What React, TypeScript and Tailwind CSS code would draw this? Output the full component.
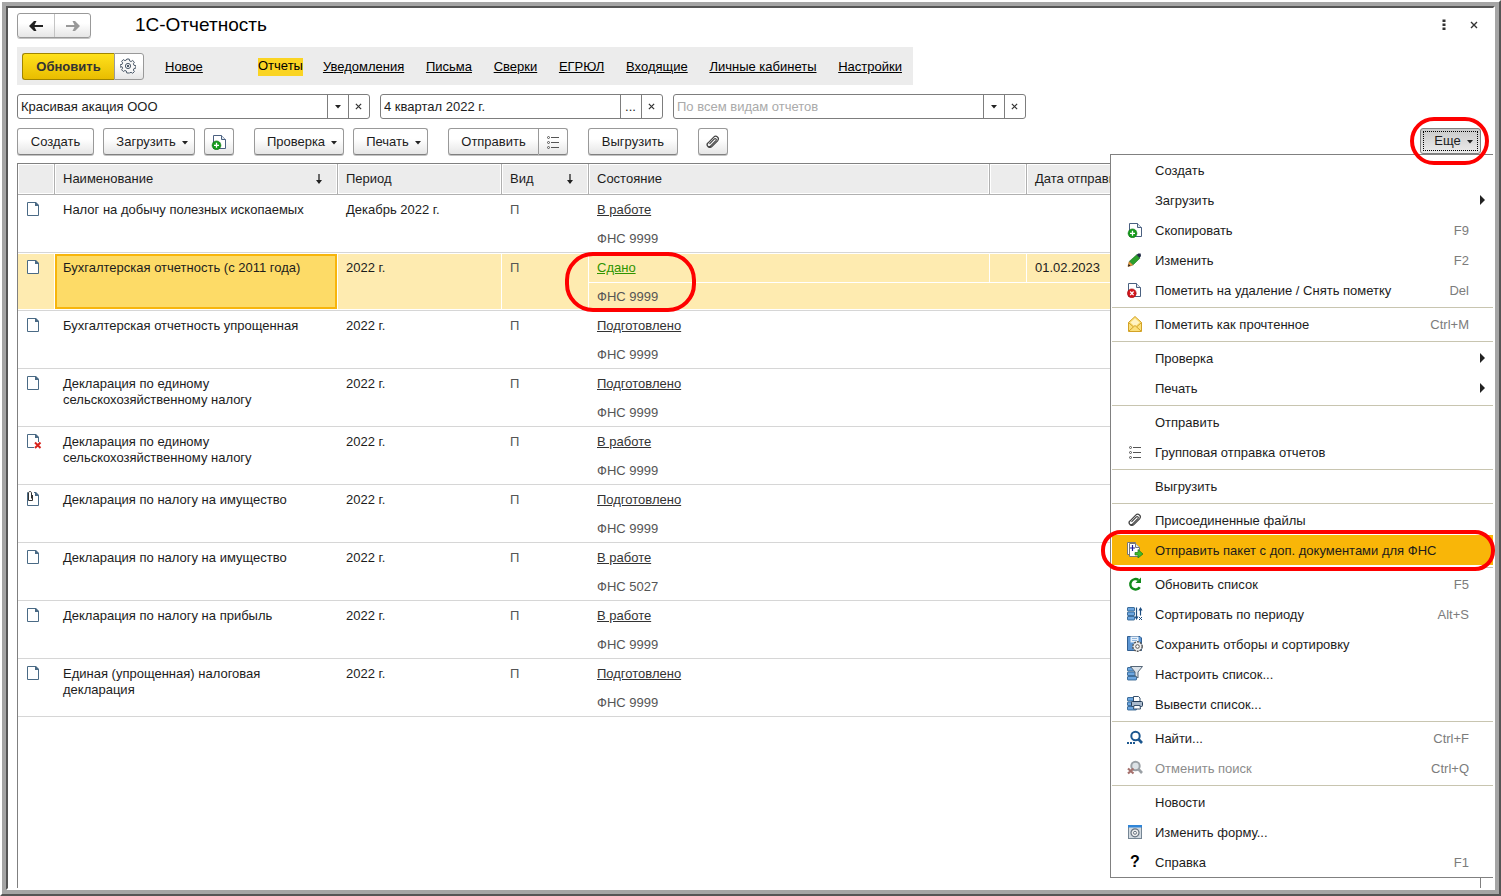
import type { ReactNode } from "react";
import clsx from "clsx";

type IconProps = { className?: string };

function FileShape() {
  return (
    <>
      <path d="M1.500 1.500h8l3 3v10h-11z" fill="#fff" stroke="#4a6a85" />
      <path d="M9 1h1l3 3v1H9z" fill="#4a6a85" />
    </>
  );
}

function FileIcon({ mark }: { mark?: "deleted" | "attached" }) {
  return (
    <svg viewBox="0 0 16 16" className="h-4 w-4" aria-hidden="true">
      <FileShape />
      {mark === "deleted" && (
        <>
          <path d="M8 9h8v7H8z" fill="#fff" />
          <path d="M9 9.500l5.500 5.500M14.500 9.500L9 15" stroke="#d8231c" strokeWidth="2" />
        </>
      )}
      {mark === "attached" && (
        <>
          <path d="M2 0h6v10H2z" fill="#fff" />
          <path d="M6.500 4v5.500h-4V2c0-2 3-2 3 0v5.500" fill="none" stroke="#333" />
        </>
      )}
    </svg>
  );
}

function FileAddIcon() {
  return (
    <svg viewBox="0 0 16 16" className="h-4 w-4" aria-hidden="true">
      <path d="M2.500 1.500h8l4 4v9h-12z" fill="#fff" stroke="#4a6080" />
      <path d="M10.500 1.500v4h4" fill="#dfe6ee" stroke="#4a6080" />
      <circle cx="5.500" cy="11.300" r="4.400" fill="#159a1c" stroke="#0b7312" strokeWidth=".6" />
      <path d="M5.500 8.800v5M3 11.300h5" stroke="#fff" strokeWidth="1.300" />
    </svg>
  );
}

function FileDeleteIcon() {
  return (
    <svg viewBox="0 0 16 16" className="h-4 w-4" aria-hidden="true">
      <path d="M1.500 1.500h8l4 4v9h-12z" fill="#fff" stroke="#4a6080" />
      <path d="M9.500 1.500v4h4" fill="#dfe6ee" stroke="#4a6080" />
      <circle cx="4.800" cy="11.300" r="4.400" fill="#d3151b" stroke="#9e0d12" strokeWidth=".6" />
      <path d="M3.200 9.500l3.400 3.600M6.600 9.500l-3.400 3.600" stroke="#fff" strokeWidth="1.300" />
    </svg>
  );
}

function PencilIcon() {
  return (
    <svg viewBox="0 0 16 16" className="h-4 w-4" aria-hidden="true">
      <path d="M1 14.500l1.200-5 3.600 3.600z" fill="#f0a13a" stroke="#a05a10" strokeWidth=".6" />
      <path d="M2.500 9.200l7.200-6.400 3.200 3.400-6.700 6.600z" fill="#2ca02c" stroke="#14701a" strokeWidth=".6" />
      <path d="M9.600 2.800l1.700-1.300h2.300l.4 2.500-1.500 2z" fill="#1f2a44" />
      <path d="M1 14.500l.7-2.600 1.900 1.900z" fill="#222" />
    </svg>
  );
}

function MailIcon() {
  return (
    <svg viewBox="0 0 16 16" className="h-4 w-4" aria-hidden="true">
      <path d="M1.500 6.500l6.500-6 6.500 6v9h-13z" fill="#fbe07c" stroke="#d3a226" />
      <path d="M3.500 6.500L8 2.500l4.500 4L8 10.500z" fill="#fff3c4" />
      <path d="M1.500 6.500L6 10.500M14.500 6.500L10 10.500M2 15l6-5.500 6 5.500" fill="none" stroke="#d3a226" />
    </svg>
  );
}

function ListIcon() {
  return (
    <svg viewBox="0 0 16 16" className="h-4 w-4" aria-hidden="true">
      <g fill="none" stroke="#555">
        <circle cx="3.500" cy="3.500" r="1" />
        <circle cx="3.500" cy="8.500" r="1" />
        <circle cx="3.500" cy="13.500" r="1" />
        <path d="M6 3.500h8M6 8.500h8M6 13.500h8" />
      </g>
    </svg>
  );
}

function ClipIcon() {
  return (
    <svg viewBox="0 0 16 16" className="h-4 w-4" aria-hidden="true">
      <path
        d="M4.500 9.800l4.600-4.700c1.300-1.300 3 .2 1.800 1.500l-5.200 5.200c-2 2-4.800-.4-2.800-2.600l5.800-6c2.400-2.400 6.300.7 3.900 3.600l-5.500 5.600c-2.600 2.500-6.500-.6-4.400-3.500"
        fill="none"
        stroke="#444"
        strokeWidth="1.200"
      />
    </svg>
  );
}

function SendPackageIcon() {
  return (
    <svg viewBox="0 0 16 16" className="h-4 w-4" aria-hidden="true">
      <path d="M.5.500h8v12h-8z" fill="#fff" stroke="#777" />
      <path d="M2.500 1.500h6l4 4v9h-10z" fill="#fff" stroke="#777" />
      <path d="M8.500 1.500v4h4" fill="#dfe6ee" stroke="#777" />
      <path d="M5.500 3v6M3 6h5" stroke="#1a1a9a" strokeWidth="1.200" />
      <path d="M8 10.500h3v-3l5 4.500-5 4v-3H8z" fill="#3fba2c" stroke="#1d7a14" strokeWidth=".7" />
    </svg>
  );
}

function RefreshIcon() {
  return (
    <svg viewBox="0 0 16 16" className="h-4 w-4" aria-hidden="true">
      <path d="M12.800 11.200A5.200 5.200 0 1 1 11.500 4" fill="none" stroke="#128a1c" strokeWidth="2.400" />
      <path d="M14 1.500V7H8.500z" fill="#128a1c" />
    </svg>
  );
}

function Rows({ width }: { width: number }) {
  return (
    <g fill="#6ca6e0" stroke="#215587" strokeWidth=".8">
      <rect x=".5" y="1.500" width={width} height="3.500" rx=".5" />
      <rect x=".5" y="6" width={width} height="3.500" rx=".5" />
      <rect x=".5" y="10.500" width={width} height="3.500" rx=".5" />
    </g>
  );
}

function SortIcon() {
  return (
    <svg viewBox="0 0 16 16" className="h-4 w-4" aria-hidden="true">
      <Rows width={7} />
      <path d="M9.500 1.500v10M13.500 4V9.500" stroke="#1b4c80" strokeWidth="1.200" />
      <path d="M7.500 10.500h4l-2 3.500zM11.500 4.500h4l-2-3.500z" fill="#1b4c80" />
      <path d="M12 11l3 3m0-3l-3 3" stroke="#1b4c80" />
    </svg>
  );
}

function Gear({ className }: IconProps) {
  return (
    <svg viewBox="0 0 16 16" className={className} aria-hidden="true">
      <path
        d="M6.800 1h2.400l.4 1.900 1.500.6 1.600-1 1.700 1.700-1 1.600.6 1.500 1.900.4v2.400l-1.900.4-.6 1.500 1 1.600-1.700 1.700-1.600-1-1.500.6L9.200 15H6.800l-.4-1.900-1.500-.6-1.600 1-1.700-1.700 1-1.600-.6-1.500L.1 9.200V6.800L2 6.400l.6-1.500-1-1.600 1.700-1.700 1.600 1 1.500-.6z"
        fill="#f7f7f7"
        stroke="#4a5868"
      />
      <circle cx="8" cy="8" r="2.600" fill="#fff" stroke="#4a5868" />
      <circle cx="8" cy="8" r="1.200" fill="#4a5868" />
    </svg>
  );
}

function SaveSettingsIcon() {
  return (
    <svg viewBox="0 0 16 16" className="h-4 w-4" aria-hidden="true">
      <path d="M.5.500H13l1.500 1.500v12.500H.5z" fill="#5b95d3" stroke="#315f92" />
      <path d="M3.500.500h8v6h-8z" fill="#e7f1fb" />
      <path d="M5 2.500h5M5 4.500h5" stroke="#8fb5dc" />
      <circle cx="10.500" cy="10.500" r="4.700" fill="#eee" stroke="#555" strokeDasharray="2 1" strokeWidth="1.400" />
      <circle cx="10.500" cy="10.500" r="1.800" fill="#fff" stroke="#555" />
    </svg>
  );
}

function FilterIcon() {
  return (
    <svg viewBox="0 0 16 16" className="h-4 w-4" aria-hidden="true">
      <Rows width={9} />
      <path d="M3.500.500h12L11 6v6l-3-2.500V6z" fill="#dce3ea" stroke="#566778" />
    </svg>
  );
}

function PrintListIcon() {
  return (
    <svg viewBox="0 0 16 16" className="h-4 w-4" aria-hidden="true">
      <Rows width={9} />
      <path d="M6.500.500h5l1.500 1.500v4H6.500z" fill="#fff" stroke="#37506c" />
      <rect x="4.500" y="5.500" width="11" height="5" rx="1" fill="#a9b9cb" stroke="#243c58" />
      <path d="M7 9.500h6l.5 3.500h-7z" fill="#fff" stroke="#37506c" />
    </svg>
  );
}

function SearchIcon() {
  return (
    <svg viewBox="0 0 16 16" className="h-4 w-4" aria-hidden="true">
      <circle cx="8.500" cy="6" r="4.200" fill="#fff" stroke="#1c578f" strokeWidth="2" />
      <path d="M11.300 9l3.700 4" stroke="#1c578f" strokeWidth="2.600" />
      <path d="M0 12h2v2H0zM3 12h2v2H3zM6 12h2v2H6z" fill="#1c578f" />
    </svg>
  );
}

function CancelSearchIcon() {
  return (
    <svg viewBox="0 0 16 16" className="h-4 w-4" aria-hidden="true">
      <circle cx="8.500" cy="6" r="4.200" fill="#dce2e6" stroke="#9aa0a5" strokeWidth="2" />
      <path d="M11.300 9l3.700 4" stroke="#9aa0a5" strokeWidth="2.600" />
      <path d="M1 8.500l5.500 5M6.500 8.500L1 13.500" stroke="#a5706c" strokeWidth="2.200" />
    </svg>
  );
}

function FormIcon() {
  return (
    <svg viewBox="0 0 16 16" className="h-4 w-4" aria-hidden="true">
      <rect x="1.500" y="1.500" width="13" height="13" fill="#d3dbe2" stroke="#768694" />
      <path d="M1 1h14v2.500H1z" fill="#2f85d8" />
      <circle cx="8" cy="8.800" r="4" fill="#eee" stroke="#677380" strokeWidth="1.200" />
      <circle cx="8" cy="8.800" r="1.500" fill="#fff" stroke="#677380" />
    </svg>
  );
}

function HelpIcon() {
  return (
    <span className="text-base leading-4 font-bold text-black" aria-hidden="true">
      ?
    </span>
  );
}

function Caret({ className }: IconProps) {
  return (
    <svg viewBox="0 0 6 4" className={clsx("h-1 w-1.5 shrink-0", className)} aria-hidden="true">
      <path d="M0 0h6L3 3.500z" fill="#222" />
    </svg>
  );
}

function Cross({ className }: IconProps) {
  return (
    <svg viewBox="0 0 8 8" className={className} aria-hidden="true">
      <path d="M1 1l6 6M7 1L1 7" stroke="#333" strokeWidth="1.400" />
    </svg>
  );
}

function Arrow({ className }: IconProps) {
  return (
    <svg viewBox="0 0 16 12" className={clsx("h-3 w-4", className)} aria-hidden="true">
      <path d="M15 6H3" stroke="currentColor" strokeWidth="2" />
      <path d="M1 6l5-5h2.500L6 6l2.500 5H6z" fill="currentColor" />
    </svg>
  );
}

function SortArrow() {
  return (
    <svg viewBox="0 0 8 10" className="h-2.5 w-2" aria-hidden="true">
      <path d="M4 0v9" stroke="#222" strokeWidth="1.300" />
      <path d="M1 6h6L4 10z" fill="#222" />
    </svg>
  );
}

const BUTTON =
  "flex h-[27px] items-center justify-center rounded-[3px] border border-[#999] border-b-[#808080] bg-linear-to-b from-white from-40% to-[#e6e6e6] shadow-[0_1px_0_#c4c4c4]";

function ToolButton({
  className,
  caret,
  label,
  children,
}: {
  className: string;
  caret?: boolean;
  label?: string;
  children: ReactNode;
}) {
  return (
    <button type="button" aria-label={label} className={clsx(BUTTON, className)}>
      {children}
      {caret && <Caret className="mt-0.5 ml-1.5" />}
    </button>
  );
}

function Field({
  label,
  value,
  placeholder,
  picker,
  className,
}: {
  label: string;
  value?: string;
  placeholder?: string;
  picker: "list" | "dialog";
  className: string;
}) {
  return (
    <div className={clsx("flex h-[25px] rounded-[3px] border border-[#7d7d7d] bg-white", className)}>
      <input
        type="text"
        aria-label={label}
        defaultValue={value}
        placeholder={placeholder}
        className="min-w-0 flex-1 bg-transparent px-[3px] outline-none placeholder:text-[#aaa]"
      />
      <button
        type="button"
        aria-label="Выбрать"
        className="flex w-[21px] items-center justify-center border-l border-[#7d7d7d] pr-px"
      >
        {picker === "list" ? <Caret /> : "..."}
      </button>
      <button
        type="button"
        aria-label="Очистить"
        className="flex w-[21px] items-center justify-center border-l border-[#7d7d7d] pr-px"
      >
        <Cross className="h-[7px] w-[7px]" />
      </button>
    </div>
  );
}

const SECTIONS = [
  "Уведомления",
  "Письма",
  "Сверки",
  "ЕГРЮЛ",
  "Входящие",
  "Личные кабинеты",
  "Настройки",
];

type Report = {
  name: string;
  period: string;
  state: string;
  office: string;
  mark?: "deleted" | "attached";
  sent?: string;
  selected?: boolean;
};

const REPORTS: Report[] = [
  { name: "Налог на добычу полезных ископаемых", period: "Декабрь 2022 г.", state: "В работе", office: "ФНС 9999" },
  {
    name: "Бухгалтерская отчетность (с 2011 года)",
    period: "2022 г.",
    state: "Сдано",
    office: "ФНС 9999",
    sent: "01.02.2023",
    selected: true,
  },
  { name: "Бухгалтерская отчетность упрощенная", period: "2022 г.", state: "Подготовлено", office: "ФНС 9999" },
  { name: "Декларация по единому сельскохозяйственному налогу", period: "2022 г.", state: "Подготовлено", office: "ФНС 9999" },
  {
    name: "Декларация по единому сельскохозяйственному налогу",
    period: "2022 г.",
    state: "В работе",
    office: "ФНС 9999",
    mark: "deleted",
  },
  { name: "Декларация по налогу на имущество", period: "2022 г.", state: "Подготовлено", office: "ФНС 9999", mark: "attached" },
  { name: "Декларация по налогу на имущество", period: "2022 г.", state: "В работе", office: "ФНС 5027" },
  { name: "Декларация по налогу на прибыль", period: "2022 г.", state: "В работе", office: "ФНС 9999" },
  { name: "Единая (упрощенная) налоговая декларация", period: "2022 г.", state: "Подготовлено", office: "ФНС 9999" },
];

type MenuItem = {
  text: string;
  icon?: ReactNode;
  hotkey?: string;
  submenu?: boolean;
  active?: boolean;
  disabled?: boolean;
};

const MENU: MenuItem[][] = [
  [
    { text: "Создать" },
    { text: "Загрузить", submenu: true },
    { text: "Скопировать", icon: <FileAddIcon />, hotkey: "F9" },
    { text: "Изменить", icon: <PencilIcon />, hotkey: "F2" },
    { text: "Пометить на удаление / Снять пометку", icon: <FileDeleteIcon />, hotkey: "Del" },
  ],
  [{ text: "Пометить как прочтенное", icon: <MailIcon />, hotkey: "Ctrl+M" }],
  [
    { text: "Проверка", submenu: true },
    { text: "Печать", submenu: true },
  ],
  [{ text: "Отправить" }, { text: "Групповая отправка отчетов", icon: <ListIcon /> }],
  [{ text: "Выгрузить" }],
  [
    { text: "Присоединенные файлы", icon: <ClipIcon /> },
    { text: "Отправить пакет с доп. документами для ФНС", icon: <SendPackageIcon />, active: true },
  ],
  [
    { text: "Обновить список", icon: <RefreshIcon />, hotkey: "F5" },
    { text: "Сортировать по периоду", icon: <SortIcon />, hotkey: "Alt+S" },
    { text: "Сохранить отборы и сортировку", icon: <SaveSettingsIcon /> },
    { text: "Настроить список...", icon: <FilterIcon /> },
    { text: "Вывести список...", icon: <PrintListIcon /> },
  ],
  [
    { text: "Найти...", icon: <SearchIcon />, hotkey: "Ctrl+F" },
    { text: "Отменить поиск", icon: <CancelSearchIcon />, hotkey: "Ctrl+Q", disabled: true },
  ],
  [
    { text: "Новости" },
    { text: "Изменить форму...", icon: <FormIcon /> },
    { text: "Справка", icon: <HelpIcon />, hotkey: "F1" },
  ],
];

// Red outline that draws attention to its parent
function Highlight({ className }: { className: string }) {
  return (
    <span
      aria-hidden="true"
      className={clsx("pointer-events-none absolute z-20 border-4 border-[#fe0000]", className)}
    />
  );
}

function MoreMenu() {
  return (
    <div
      role="menu"
      className="absolute top-full -right-3 z-10 w-[383px] border-y border-l border-[#808080] bg-white pl-px"
    >
      {MENU.map((group, i) => (
        <div key={i}>
          {i > 0 && (
            <div className="h-1 pt-0.5">
              <div className="h-px bg-[#c8c5b0]" />
            </div>
          )}
          {group.map((item) => (
            <button
              key={item.text}
              type="button"
              role="menuitem"
              disabled={item.disabled}
              className={clsx(
                "relative flex h-[30px] w-full items-center pl-[15px] text-left",
                item.disabled && "text-[#8c8c8c]",
                item.active && "bg-[#f9b608]",
              )}
            >
              <span className="mr-3 flex w-4 justify-center">{item.icon}</span>
              <span className="flex-1 pt-0.5 whitespace-nowrap">{item.text}</span>
              {item.hotkey && <span className="mr-6 pt-0.5 text-[#7c7c7c]">{item.hotkey}</span>}
              {item.submenu && (
                <svg viewBox="0 0 5 10" className="mr-2 h-2.5 w-[5px]" aria-hidden="true">
                  <path d="M0 0l5 5-5 5z" fill="#222" />
                </svg>
              )}
              {item.active && <Highlight className="-top-[5px] -right-0.5 -left-[11px] h-[41px] rounded-[20px]" />}
            </button>
          ))}
        </div>
      ))}
    </div>
  );
}

const TH = "h-[31px] border-r border-b border-[#b0b0b0] px-2 text-left font-normal shadow-[inset_0_0_0_1px_#fff]";
const LINK = "whitespace-nowrap underline underline-offset-1";

function ReportRows({ report }: { report: Report }) {
  const fill = report.selected && "bg-[#feebb0] shadow-[inset_-1px_-1px_0_#fff,inset_0_1px_0_#fff]";
  const fillTop = report.selected && "bg-[#feebb0] shadow-[inset_-1px_0_0_#fff,inset_0_1px_0_#fff]";
  const cell = clsx("border-b border-[#d6d6d6] px-2 align-top", fill);
  return (
    <>
      <tr className="h-[29px]">
        <td rowSpan={2} className={clsx(cell, "pt-1.5")}>
          <FileIcon mark={report.mark} />
        </td>
        <td
          rowSpan={2}
          className={clsx(
            "border-b border-[#d6d6d6] align-top",
            report.selected ? "h-[58px] py-px pr-px" : "px-2 pt-[7px]",
          )}
        >
          {report.selected ? (
            <div className="h-[55px] border-2 border-[#f7b50c] bg-[#fddb67] px-1.5 pt-1">{report.name}</div>
          ) : (
            report.name
          )}
        </td>
        <td rowSpan={2} className={clsx(cell, "pt-[7px]")}>
          {report.period}
        </td>
        <td rowSpan={2} className={clsx(cell, "pt-[7px] text-[#555]")}>
          П
        </td>
        <td className={clsx("relative px-2", fillTop)}>
          <a href="#" className={clsx(LINK, report.selected ? "text-[#2f9400]" : "text-[#333]")}>
            {report.state}
          </a>
          {report.selected && <Highlight className="-top-px -left-6 h-[60px] w-[131px] rounded-[28px]" />}
        </td>
        <td className={clsx(fillTop)} />
        <td className={clsx("px-2", fillTop)}>{report.sent}</td>
      </tr>
      <tr className="h-[29px]">
        <td colSpan={3} className={clsx("border-b border-[#d6d6d6] px-2 pt-0.5 text-[#555]", fill)}>
          {report.office}
        </td>
      </tr>
    </>
  );
}

export default function App() {
  return (
    <div className="flex min-h-screen border-2 border-white border-r-[#555] border-b-[#555] bg-white font-['Liberation_Sans',Arial,sans-serif] text-[13px] leading-4 text-[#1c1c1c]">
      <div className="flex min-w-0 flex-1 border-4 border-[#a5a5a5]">
        <div className="flex min-w-0 flex-1 flex-col border-2 border-white border-t-[#555] border-l-[#555] pl-[9px]">
          <header className="flex h-[39px] items-start pt-[5px] pr-[15px]">
            <div className="flex h-[25px] rounded-[3px] border border-[#999] bg-linear-to-b from-white from-40% to-[#e6e6e6] shadow-[0_1px_0_#c4c4c4]">
              <button type="button" aria-label="Назад" className="flex w-9 items-center justify-center">
                <Arrow className="text-[#222]" />
              </button>
              <button
                type="button"
                aria-label="Вперед"
                className="flex w-9 items-center justify-center border-l border-[#c4c4c4]"
              >
                <Arrow className="rotate-180 text-[#999]" />
              </button>
            </div>
            <h1 className="ml-11 flex-1 text-[19px] leading-6 text-black">1С-Отчетность</h1>
            <button type="button" aria-label="Меню окна" className="flex h-6 w-4 items-center justify-center">
              <svg viewBox="0 0 4 12" className="h-3 w-1" aria-hidden="true">
                <path d="M.5.500h3v2.500h-3zM.5 4.500h3V7h-3zM.5 8.500h3V11h-3z" fill="#333" />
              </svg>
            </button>
            <button type="button" aria-label="Закрыть" className="ml-[18px] flex h-6 w-2 items-center justify-center">
              <Cross className="h-2 w-2" />
            </button>
          </header>

          <nav className="flex h-[38px] w-[896px] max-w-full items-center bg-[#ececec] px-[5px] text-black">
            <button
              type="button"
              className="h-[27px] w-[92px] rounded-l-[3px] border border-r-0 border-[#a08500] bg-linear-to-b from-[#ffe11a] to-[#e9bd00] pt-px font-bold text-[#333]"
            >
              Обновить
            </button>
            <button
              type="button"
              aria-label="Настройка обновления"
              className="flex h-[27px] w-[30px] items-center justify-center rounded-r-[3px] border border-[#999] bg-linear-to-b from-white from-40% to-[#e6e6e6] pr-0.5"
            >
              <Gear className="h-4 w-4" />
            </button>
            <div className="flex flex-1 items-center pt-0.5 pr-1.5 pl-[21px]">
              <a href="#" className={clsx(LINK, "w-[93px]")}>
                Новое
              </a>
              <a href="#" className="mr-5 bg-[#fad423] pb-0.5">
                Отчеты
              </a>
              <div className="flex flex-1 justify-between">
                {SECTIONS.map((section) => (
                  <a key={section} href="#" className={LINK}>
                    {section}
                  </a>
                ))}
              </div>
            </div>
          </nav>

          <div className="mt-[9px] flex gap-2.5">
            <Field label="Организация" value="Красивая акация ООО" picker="list" className="w-[353px]" />
            <Field label="Период" value="4 квартал 2022 г." picker="dialog" className="w-[283px]" />
            <Field label="Вид отчета" placeholder="По всем видам отчетов" picker="list" className="w-[353px]" />
          </div>

          <div className="mt-[9px] flex pr-3">
            <ToolButton className="w-[77px]">Создать</ToolButton>
            <ToolButton className="ml-[9px] w-[92px] pl-1.5" caret>
              Загрузить
            </ToolButton>
            <ToolButton className="ml-[9px] w-[30px]" label="Скопировать">
              <FileAddIcon />
            </ToolButton>
            <ToolButton className="ml-5 w-[90px] pl-1.5" caret>
              Проверка
            </ToolButton>
            <ToolButton className="ml-[9px] w-[75px] pl-1.5" caret>
              Печать
            </ToolButton>
            <ToolButton className="ml-5 w-[91px] rounded-r-none">Отправить</ToolButton>
            <ToolButton className="w-[29px] rounded-l-none border-l-0" label="Групповая отправка">
              <ListIcon />
            </ToolButton>
            <ToolButton className="ml-5 w-[90px]">Выгрузить</ToolButton>
            <ToolButton className="ml-5 w-[30px]" label="Присоединенные файлы">
              <ClipIcon />
            </ToolButton>
            <div className="relative ml-auto h-[26px]">
              <button
                type="button"
                aria-haspopup="menu"
                aria-expanded="true"
                className="h-[26px] w-[61px] rounded-[3px] border border-[#808080] bg-linear-to-b from-[#c9c9c9] to-[#ececec] p-0.5"
              >
                <span className="flex h-full items-center justify-center border border-dotted border-black pl-1.5">
                  Еще
                  <Caret className="mt-0.5 ml-1.5" />
                </span>
              </button>
              <Highlight className="-top-[11px] -left-2.5 h-12 w-[79px] rounded-3xl" />
              <MoreMenu />
            </div>
          </div>

          <main className="mt-2 mr-3 flex-1 border border-b-0 border-[#808080]">
            <table className="w-full table-fixed border-separate border-spacing-0">
              <colgroup>
                <col className="w-[37px]" />
                <col className="w-[283px]" />
                <col className="w-[164px]" />
                <col className="w-[87px]" />
                <col className="w-[401px]" />
                <col className="w-[37px]" />
                <col />
              </colgroup>
              <thead className="bg-[#ececec]">
                <tr>
                  <th className={TH} aria-label="Отметка" />
                  <th className={TH}>
                    <span className="flex items-center justify-between pr-1.5">
                      Наименование
                      <SortArrow />
                    </span>
                  </th>
                  <th className={TH}>Период</th>
                  <th className={TH}>
                    <span className="flex items-center justify-between pr-1.5">
                      Вид
                      <SortArrow />
                    </span>
                  </th>
                  <th className={TH}>Состояние</th>
                  <th className={TH} aria-label="Вложения" />
                  <th className={clsx(TH, "whitespace-nowrap")}>Дата отправки</th>
                </tr>
              </thead>
              <tbody>
                {REPORTS.map((report, i) => (
                  <ReportRows key={i} report={report} />
                ))}
              </tbody>
            </table>
          </main>
        </div>
      </div>
    </div>
  );
}
